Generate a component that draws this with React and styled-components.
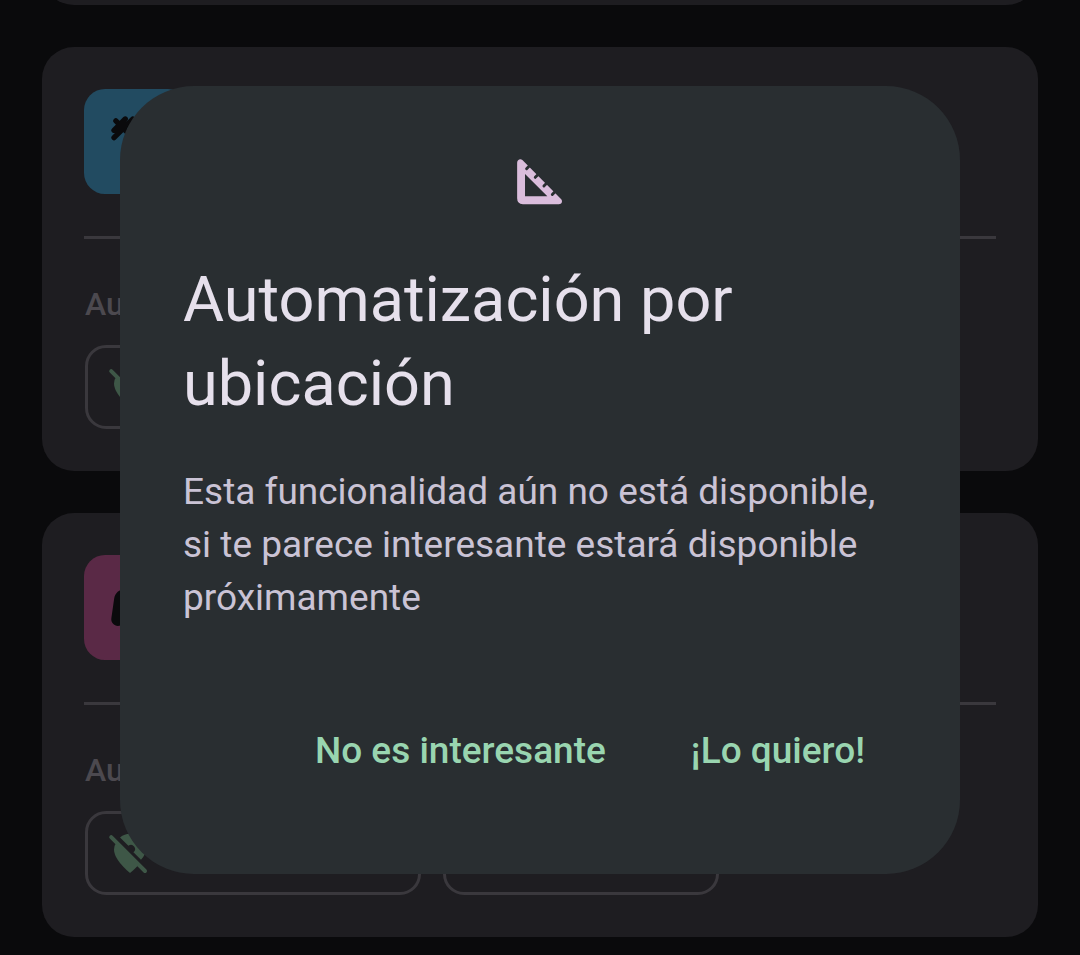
import React from "react";
import styled, { createGlobalStyle } from "styled-components";
import { MdSportsEsports } from "react-icons/md";

const GlobalStyle = createGlobalStyle`
  * { box-sizing: border-box; }
  body {
    margin: 0;
    background: #0a0a0c;
    font-family: Roboto, "Noto Sans", sans-serif;
  }
`;

const Screen = styled.main`
  height: 100vh;
  overflow: hidden;
  display: flex;
  flex-direction: column;
  justify-content: flex-end;
  gap: 42px;
  padding: 0 42px 18px;
`;

const Card = styled.section`
  flex: none;
  display: flex;
  flex-direction: column;
  padding: 42px;
  border-radius: 32px;
  background: #1e1d21;
`;

const Tile = styled.div`
  width: 105px;
  height: 105px;
  padding: 21px;
  border-radius: 21px;
  background: ${(p) => p.$color};
  color: #0a0a0c;

  svg { display: block; }
`;

const Divider = styled.hr`
  width: 100%;
  height: 3px;
  margin: 42px 0 44px;
  border: 0;
  background: #3a383d;
`;

const Label = styled.h3`
  margin: 0 0 20px;
  padding-left: 1px;
  font-size: 32px;
  line-height: 42px;
  font-weight: 500;
  color: #4c494f;
`;

const Chips = styled.div`
  display: flex;
  gap: 22px;
  padding-left: 1px;
`;

const Chip = styled.button`
  display: flex;
  align-items: center;
  width: ${(p) => p.$width};
  height: 84px;
  padding: 0 18px;
  border: 3px solid #3a383d;
  border-radius: 21px;
  background: transparent;
  color: #3e5747;
`;

const Overlay = styled.div`
  position: fixed;
  inset: 0;
  display: flex;
  align-items: center;
  justify-content: center;
  padding: 5px 120px 0;
`;

const Dialog = styled.div`
  display: flex;
  flex-direction: column;
  width: 100%;
  padding: 63px 63px 71px;
  border-radius: 74px;
  background: #292e31;
`;

const DialogIcon = styled.svg`
  align-self: center;
  width: 63px;
  height: 63px;
  margin-bottom: 46px;
`;

const Title = styled.h2`
  margin: 0 0 39px;
  font-size: 63px;
  line-height: 84px;
  font-weight: 400;
  color: #e6e0ec;
`;

const Message = styled.p`
  margin: 0 0 73px;
  font-size: 37px;
  line-height: 53px;
  color: #cac3d5;
`;

const Actions = styled.div`
  display: flex;
  justify-content: flex-end;
  gap: 21px;
`;

const TextButton = styled.button`
  height: 106px;
  padding: 0 32px;
  border: 0;
  background: transparent;
  font-family: inherit;
  font-size: 37px;
  font-weight: 500;
  color: #99d5b0;
  white-space: nowrap;
`;

function DumbbellIcon() {
  return (
    <svg width="63" height="63" viewBox="0 0 24 24" fill="none" stroke="currentColor" strokeWidth="2.02" strokeLinecap="round" aria-hidden="true">
      <path d="M3.43 10.57 10.57 3.43M3.42 7.72 7.72 3.42M4.14 4.14 19.86 19.86M13.43 20.57 20.57 13.43M16.28 20.58 20.58 16.28M5 7.5 7.5 5M16.5 19 19 16.5" />
    </svg>
  );
}

function LocationOffIcon() {
  return (
    <svg width="48" height="48" viewBox="0 0 24 24" fill="currentColor" aria-hidden="true">
      <path d="M7 4.2A8 8 0 0 1 20 10.2Q20 12.5 17.5 15.4L13.7 11.6A2 2 0 0 0 11.2 8.4Z" />
      <path d="M5.2 6.8Q4 8.5 4 10.2 4 15.1 12 22 14 20.4 15.8 18.5L16 17.6Z" />
      <path d="M2.6 4.1 19.5 21" fill="none" stroke="currentColor" strokeWidth="2" strokeLinecap="round" />
    </svg>
  );
}

function SetSquareIcon() {
  return (
    <DialogIcon viewBox="0 0 24 24" aria-hidden="true">
      <path
        fill="#dabddc"
        fillRule="evenodd"
        d="M3.1 5.2C3.1 4.1 4.3 3.5 5.1 4.2L19.8 19C20.6 19.8 20.1 21 19 21H5.3Q3.1 21 3.1 18.8ZM6.1 9.5V18H14.6Z"
      />
      <path
        fill="none"
        stroke="#292e31"
        strokeWidth="1.1"
        strokeLinecap="round"
        d="M8 6.2 6.7 7.5M11.3 9.5 10 10.8M14.6 12.8 13.3 14.1M17.8 16 16.5 17.3"
      />
    </DialogIcon>
  );
}

function DeviceCard({ color, icon }) {
  return (
    <Card>
      <Tile $color={color}>{icon}</Tile>
      <Divider />
      <Label>Au</Label>
      <Chips>
        <Chip $width="336px" aria-label="Ubicación"><LocationOffIcon /></Chip>
        <Chip $width="276px" aria-label="Otra automatización" />
      </Chips>
    </Card>
  );
}

export default function App() {
  return (
    <>
      <GlobalStyle />
      <Screen>
        <Card />
        <DeviceCard color="#224b61" icon={<DumbbellIcon />} />
        <DeviceCard color="#5a2946" icon={<MdSportsEsports size={63} />} />
      </Screen>
      <Overlay>
        <Dialog role="dialog" aria-modal="true" aria-labelledby="dialog-title">
          <SetSquareIcon />
          <Title id="dialog-title">Automatización por ubicación</Title>
          <Message>
            Esta funcionalidad aún no está disponible, si te parece interesante estará disponible próximamente
          </Message>
          <Actions>
            <TextButton type="button">No es interesante</TextButton>
            <TextButton type="button">¡Lo quiero!</TextButton>
          </Actions>
        </Dialog>
      </Overlay>
    </>
  );
}
